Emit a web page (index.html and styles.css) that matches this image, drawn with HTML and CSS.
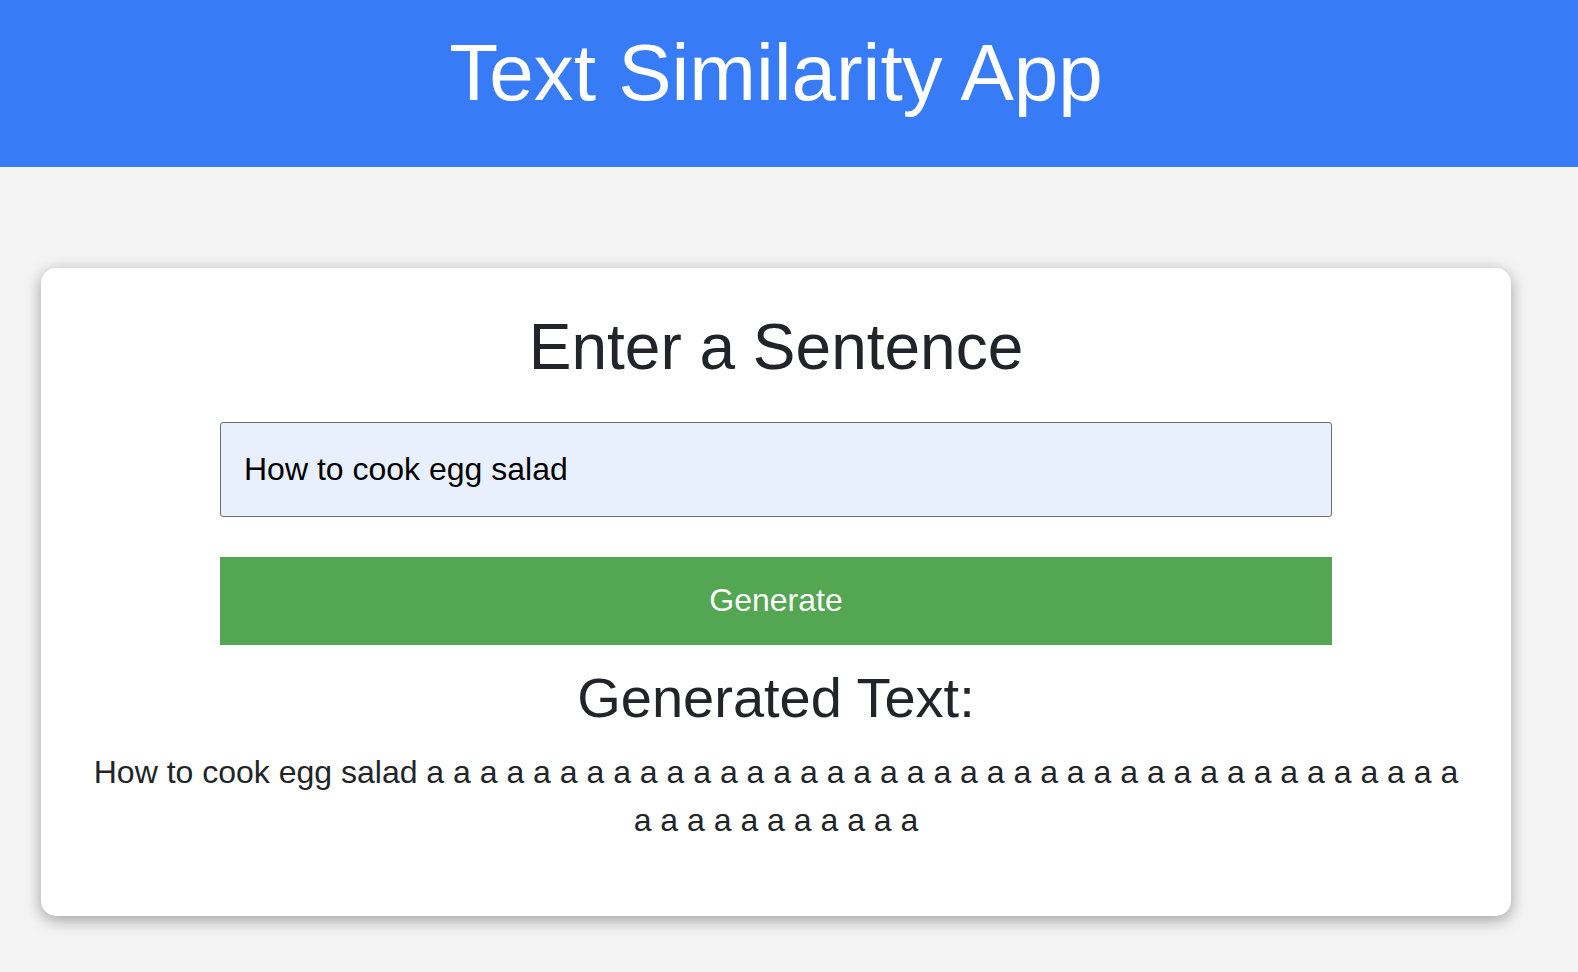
FILE: index.html
```html
<!DOCTYPE html>
<html lang="en">
<head>
<meta charset="utf-8">
<title>Text Similarity App</title>
<link rel="stylesheet" href="styles.css">
</head>
<body>
<header class="app-header">
  <h1 class="app-title">Text Similarity App</h1>
</header>
<main class="main">
  <section class="card">
    <h2 class="card-title">Enter a Sentence</h2>
    <form class="form">
      <input class="sentence-input" type="text" value="How to cook egg salad">
      <button class="generate-btn" type="button">Generate</button>
    </form>
    <h3 class="result-title">Generated Text:</h3>
    <p class="result-text">How to cook egg salad a a a a a a a a a a a a a a a a a a a a a a a a a a a a a a a a a a a a a a a a a a a a a a a a a a</p>
  </section>
</main>
</body>
</html>
```

FILE: styles.css
```css
html, body {
  margin: 0;
  padding: 0;
}

body {
  background: #f4f4f4;
  font-family: "Liberation Sans", Arial, sans-serif;
  color: #212529;
}

.app-header {
  background: #377bf7;
  color: #ffffff;
  padding: 25px 26px 46px 0;
  text-align: center;
}

.app-title {
  margin: 0;
  font-size: 80px;
  font-weight: 400;
  line-height: 96px;
}

.main {
  padding: 101px 67px 56px 41px;
}

.card {
  background: #ffffff;
  border-radius: 15px;
  box-shadow: 0 4px 16px rgba(0, 0, 0, 0.35);
  padding: 41px 40px 40px 40px;
  text-align: center;
}

.card-title {
  margin: 0 0 36px 0;
  font-size: 64px;
  font-weight: 400;
  line-height: 1.2;
  color: #212529;
}

.form {
  display: flex;
  flex-direction: column;
  align-items: center;
  gap: 40px;
}

.sentence-input {
  box-sizing: border-box;
  width: 80%;
  height: 95px;
  margin: 0;
  padding: 0 23px;
  border: 1px solid #6f6f6f;
  border-radius: 3px;
  background: #e8f0fe;
  font-family: "Liberation Sans", Arial, sans-serif;
  font-size: 32px;
  color: #000000;
  outline: none;
}

.generate-btn {
  box-sizing: border-box;
  width: 80%;
  height: 88px;
  margin: 0;
  padding: 0;
  border: none;
  border-radius: 0;
  background: #53a652;
  color: #ffffff;
  font-family: "Liberation Sans", Arial, sans-serif;
  font-size: 32px;
  cursor: pointer;
}

.result-title {
  margin: 19px 0 17px 0;
  font-size: 56px;
  font-weight: 400;
  line-height: 1.2;
  color: #212529;
}

.result-text {
  margin: 0 0 32px 0;
  font-size: 32px;
  line-height: 48px;
  color: #212529;
}
```
